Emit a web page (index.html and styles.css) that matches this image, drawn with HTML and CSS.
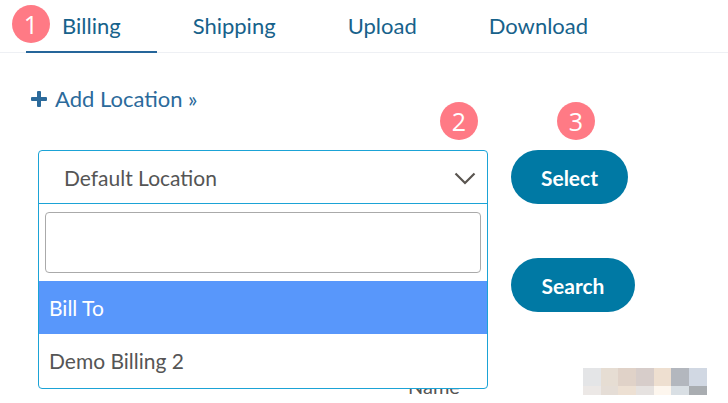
FILE: index.html
```html
<!DOCTYPE html>
<html>
<head>
<meta charset="utf-8">
<link rel="stylesheet" href="styles.css">
</head>
<body>
<div class="page">
  <nav class="tabs">
    <span class="badge badge-1">1</span>
    <a class="tab active">Billing</a>
    <a class="tab">Shipping</a>
    <a class="tab">Upload</a>
    <a class="tab">Download</a>
  </nav>

  <div class="add-row">
    <a class="add-link"><svg class="plus" width="16" height="16" viewBox="0 0 16 16"><rect x="6" y="0" width="4" height="16" rx="1"/><rect x="0" y="6" width="16" height="4" rx="1"/></svg>Add Location »</a>
  </div>

  <div class="main">
    <div class="select-col">
      <span class="hidden-label">Name</span>
      <div class="dropdown">
        <div class="dd-head">
          <span class="dd-value">Default Location</span>
          <svg class="chev" width="22" height="13" viewBox="0 0 22 13"><path d="M1.5 1.5 L11 11 L20.5 1.5" fill="none" stroke="#5a5550" stroke-width="2.2"/></svg>
        </div>
        <div class="dd-search"><div class="dd-input"></div></div>
        <div class="dd-option highlighted">Bill To</div>
        <div class="dd-option">Demo Billing 2</div>
      </div>
      <span class="badge badge-2">2</span>
    </div>
    <div class="btn-col">
      <span class="badge badge-3">3</span>
      <button class="btn btn-select">Select</button>
      <button class="btn btn-search">Search</button>
    </div>
  </div>

  <div class="pixels">
    <i style="background:#e4e5e7"></i><i style="background:#e6ddd3"></i><i style="background:#e0d2c8"></i><i style="background:#d7cdca"></i><i style="background:#eedfd0"></i><i style="background:#b3b7be"></i><i style="background:#d1d8e3"></i>
    <i style="background:#ece8e6"></i><i style="background:#e5ddd6"></i><i style="background:#ede0d3"></i><i style="background:#e6e2e0"></i><i style="background:#fdf6ee"></i><i style="background:#d9dfe4"></i><i style="background:#a9adb1"></i>
  </div>
</div>
</body>
</html>
```

FILE: styles.css
```css
* { box-sizing: border-box; }
html, body { margin: 0; padding: 0; background: #fff; }
body {
  font-family: Lato, "Open Sans", sans-serif;
  width: 728px;
  height: 403px;
  overflow: hidden;
}
.page { position: relative; height: 403px; }

.tabs {
  position: relative;
  display: flex;
  height: 53px;
  padding-left: 26px;
  border-bottom: 1px solid #eef0f4;
}
.tab {
  display: block;
  padding: 0 36px;
  font-size: 22px;
  line-height: 51px;
  color: #17628b;
  cursor: pointer;
}
.tab.active { border-bottom: 2px solid #25659a; height: 53px; }

.badge {
  position: absolute;
  z-index: 2;
  width: 38px;
  height: 38px;
  border-radius: 50%;
  background: #ff7a85;
  color: #fff;
  font-size: 25px;
  line-height: 38px;
  text-align: center;
  font-family: "Open Sans", sans-serif;
}
.badge-1 { left: 12px; top: 5px; }
.badge-2 { left: 402px; top: -48px; }
.badge-3 { left: 46px; top: -48px; }

.add-row { padding: 33px 0 0 31px; height: 97px; }
.add-link {
  display: inline-flex;
  align-items: center;
  gap: 8px;
  font-size: 22px;
  color: #2b6a9b;
  line-height: 26px;
}
.plus { fill: #2b6a9b; }

.main { display: flex; padding-left: 38px; gap: 23px; }
.select-col { position: relative; width: 450px; height: 239px; }
.hidden-label {
  position: absolute;
  z-index: 0;
  left: 370px;
  top: 224px;
  font-size: 20px;
  color: #555;
}
.dropdown {
  position: absolute;
  z-index: 1;
  left: 0;
  top: 0;
  width: 450px;
  border: 1px solid #1ba3d6;
  border-radius: 4px;
  background: #fff;
  overflow: hidden;
}
.dd-head {
  display: flex;
  align-items: center;
  justify-content: space-between;
  height: 53px;
  padding: 0 11px 0 25px;
  border-bottom: 1px solid #1ba3d6;
}
.dd-value { font-size: 21px; color: #555; }
.chev { margin-top: 2px; }
.dd-search { padding: 8px 6px; }
.dd-input {
  height: 61px;
  border: 1px solid #aaa;
  border-radius: 4px;
}
.dd-option {
  height: 53px;
  line-height: 53px;
  padding-left: 10px;
  font-size: 21px;
  color: #555;
}
.dd-option.highlighted { background: #5897fb; color: #fff; }
.dd-option + .dd-option { height: 54px; line-height: 54px; }

.btn-col {
  position: relative;
  display: flex;
  flex-direction: column;
  align-items: flex-start;
  gap: 54px;
}
.btn {
  height: 54px;
  border: 0;
  border-radius: 27px;
  background: #0079a4;
  color: #fff;
  font-family: Lato, "Open Sans", sans-serif;
  font-weight: 700;
  font-size: 21px;
  padding: 0;
}
.btn-select { width: 117px; }
.btn-search { width: 124px; }

.pixels {
  position: absolute;
  left: 583px;
  top: 368px;
  display: grid;
  grid-template-columns: repeat(7, 17.7px);
  grid-template-rows: 18px 9px;
}
.pixels i { display: block; }
```
